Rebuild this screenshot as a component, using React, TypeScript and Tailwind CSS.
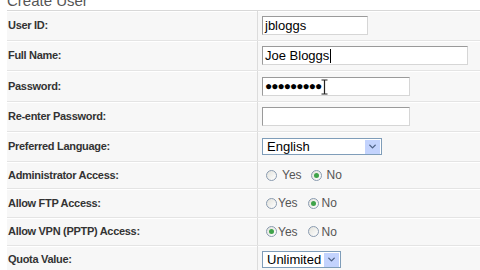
import { ChevronDown } from "lucide-react";

/* ── Types ── */

interface FormRow {
  readonly label: string;
  readonly height: string;
  readonly control: React.ReactNode;
}

/* ── Small controls ── */

function TextBox({ width, children }: { width: string; children?: React.ReactNode }) {
  return (
    <div
      className={`relative flex h-[19px] items-center border border-[#9a9a9a] border-b-[#d6d6d6] border-r-[#d6d6d6] bg-white pl-[2px] text-[13px] leading-none text-black ${width}`}
    >
      {children}
    </div>
  );
}

function SelectBox({ width, value }: { width: string; value: string }) {
  return (
    <div className={`flex h-[17px] items-center border border-[#7f9db9] bg-white ${width}`}>
      <span className="flex-1 pl-[4px] text-[13px] leading-none text-black">{value}</span>
      <span className="m-[1px] flex h-[14px] w-[15px] items-center justify-center bg-[#c3d3fd]">
        <ChevronDown className="h-[11px] w-[11px] text-[#4d6185]" strokeWidth={3} />
      </span>
    </div>
  );
}

function Radio({ checked, label, gap }: { checked: boolean; label: string; gap: string }) {
  return (
    <span className={`flex items-center ${gap}`}>
      <span className="flex h-[11px] w-[11px] items-center justify-center rounded-full border border-[#8a9bb0] bg-gradient-to-br from-[#e2e2dc] to-white">
        {checked && <span className="h-[5px] w-[5px] rounded-full bg-[#3fa34a]" />}
      </span>
      <span className="text-[12px] leading-none text-[#555]">{label}</span>
    </span>
  );
}

function RadioPair({ yes, tight }: { yes: boolean; tight?: boolean }) {
  return (
    <div className={`flex items-center pl-[4px] ${tight ? "gap-[10px]" : "gap-[9px]"}`}>
      <Radio checked={yes} label="Yes" gap={tight ? "gap-[1px]" : "gap-[5px]"} />
      <Radio checked={!yes} label="No" gap={tight ? "gap-[3px]" : "gap-[5px]"} />
    </div>
  );
}

/* ── Rows ── */

const ROWS: FormRow[] = [
  {
    label: "User ID:",
    height: "h-[30px]",
    control: <TextBox width="w-[106px]">jbloggs</TextBox>,
  },
  {
    label: "Full Name:",
    height: "h-[30px]",
    control: (
      <TextBox width="w-[206px]">
        Joe Bloggs
        <span className="ml-[1px] h-[14px] w-px bg-black" />
      </TextBox>
    ),
  },
  {
    label: "Password:",
    height: "h-[31px]",
    control: (
      <TextBox width="w-[148px]">
        <span className="text-[12px] tracking-[-1px]">●●●●●●●●●</span>
        <svg className="absolute left-[58px] top-[1px]" width="7" height="16" viewBox="0 0 7 16">
          <path d="M0.5 1h6M3.5 1v14M0.5 15h6" stroke="#222" strokeWidth="1.2" fill="none" />
        </svg>
      </TextBox>
    ),
  },
  {
    label: "Re-enter Password:",
    height: "h-[30px]",
    control: <TextBox width="w-[148px]" />,
  },
  {
    label: "Preferred Language:",
    height: "h-[30px]",
    control: <SelectBox width="w-[120px]" value="English" />,
  },
  {
    label: "Administrator Access:",
    height: "h-[27px]",
    control: <RadioPair yes={false} />,
  },
  {
    label: "Allow FTP Access:",
    height: "h-[29px]",
    control: <RadioPair yes={false} tight />,
  },
  {
    label: "Allow VPN (PPTP) Access:",
    height: "h-[28px]",
    control: <RadioPair yes tight />,
  },
  {
    label: "Quota Value:",
    height: "h-[28px]",
    control: <SelectBox width="w-[79px]" value="Unlimited" />,
  },
];

/* ── Component ── */

export default function App() {
  return (
    <div className="h-[270px] w-[480px] overflow-hidden bg-white font-['Liberation_Sans',Arial,sans-serif]">
      {/* Title, scrolled partly off the top */}
      <div className="flex h-[10px] items-start overflow-visible">
        <h1 className="ml-[7px] mt-[-7px] text-[15px] leading-none text-[#555]">Create User</h1>
      </div>

      {/* Form table */}
      <div className="ml-[7px] border-t border-[#d8d8d8]">
        {ROWS.map((row) => (
          <div
            key={row.label}
            className={`flex border-b border-[#e4e4e4] bg-[#f7f7f7] shadow-[inset_0_1px_0_#ffffff] ${row.height}`}
          >
            <div className="flex w-[250px] items-center pl-[1px] text-[11px] font-bold tracking-[-0.3px] text-[#333]">
              {row.label}
            </div>
            <div className="flex flex-1 items-center border-l border-[#dcdcdc] pl-[4px]">{row.control}</div>
          </div>
        ))}
      </div>
    </div>
  );
}
